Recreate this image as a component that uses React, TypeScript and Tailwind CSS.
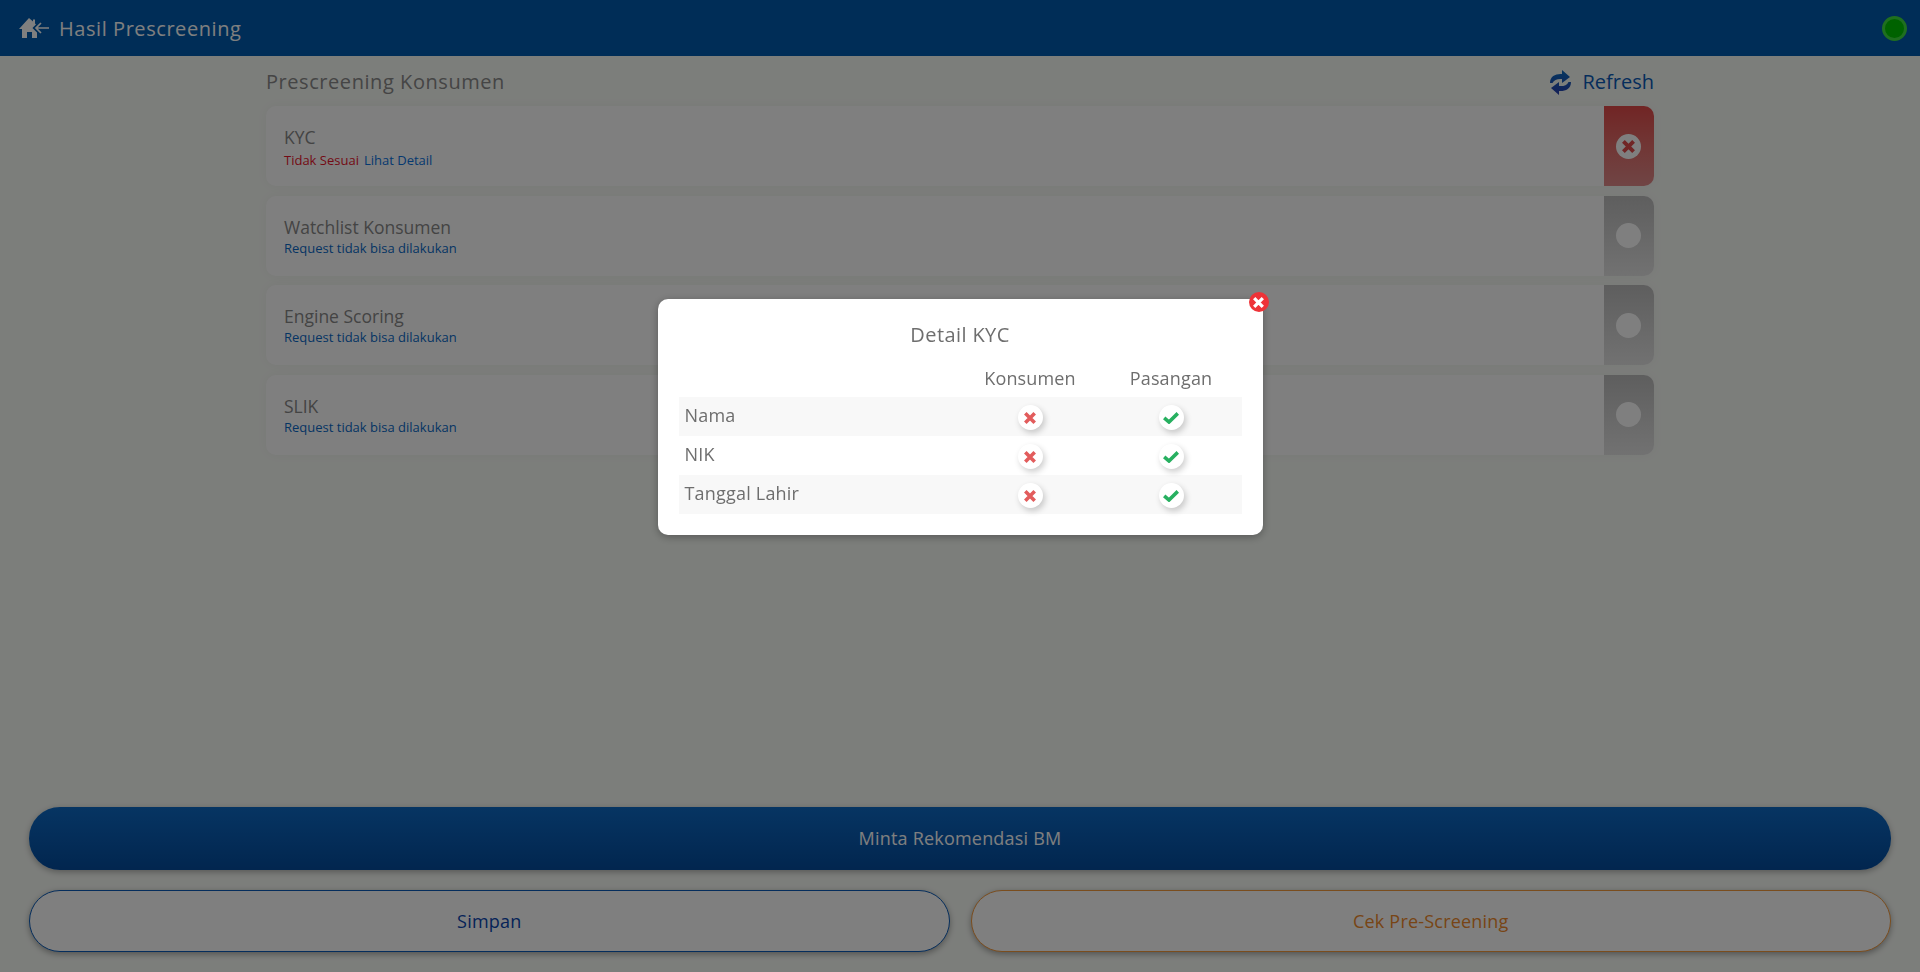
type Row = { title: string; failed?: boolean };

const rows: Row[] = [
  { title: "KYC", failed: true },
  { title: "Watchlist Konsumen" },
  { title: "Engine Scoring" },
  { title: "SLIK" },
];

const kycRows = ["Nama", "NIK", "Tanggal Lahir"];

function CrossIcon({ className }: { className: string }) {
  return (
    <svg viewBox="0 0 12 12" className={className} fill="none" stroke="currentColor" strokeWidth="3.6">
      <path d="M1.3 1.3 L10.7 10.7 M10.7 1.3 L1.3 10.7" />
    </svg>
  );
}

function CheckIcon({ className }: { className: string }) {
  return (
    <svg viewBox="0 0 16 12" className={className} fill="none" stroke="currentColor" strokeWidth="3.6">
      <path d="M1.2 5.8 L6 10 L14.8 1.4" />
    </svg>
  );
}

function HomeBackIcon() {
  return (
    <svg width="31" height="20" viewBox="0 0 31 20" className="text-white">
      <path
        fill="currentColor"
        d="M10 0 L14 3.5 L14 1.5 L16 1.5 L16 5.5 L20 9.5 L18 11 L18 20 L13 20 L13 14 L8 14 L8 20 L3 20 L3 11 L0 11 Z"
      />
      <path d="M22 5 L17 10 L22 15" fill="none" stroke="#005aae" strokeWidth="5" />
      <path d="M22 5 L17 10 L22 15 M17 10 L30 10" fill="none" stroke="currentColor" strokeWidth="1.7" />
    </svg>
  );
}

function RefreshIcon() {
  return (
    <svg width="21" height="25" viewBox="0 0 21 25">
      <defs>
        <linearGradient id="refresh-fill" x1="0" y1="0" x2="0" y2="1">
          <stop offset="0" stopColor="#0a6cc0" />
          <stop offset="1" stopColor="#2a3fb0" />
        </linearGradient>
      </defs>
      <path
        fill="url(#refresh-fill)"
        d="M0 13 C0 6 6 3.5 12 4 L12 0 L20 7 L12 13 L12 9 C8 8.5 4 9.5 2.5 13 Z M21 12 C21 19 15 21.5 9 21 L9 25 L1 18 L9 12 L9 16 C13 16.5 17 15.5 18.5 12 Z"
      />
    </svg>
  );
}

function PrescreeningCard({ title, failed }: Row) {
  return (
    <div className="flex h-[80px] overflow-hidden rounded-[10px] bg-white shadow-[0_0_12px_rgba(0,0,0,0.04)]">
      <div className="flex-1 pl-[18px] pt-[19px]">
        <div className="text-[17.5px] leading-[24px] text-[#888888]">{title}</div>
        {failed ? (
          <div className="mt-[3px] flex gap-[5px] text-[13px] font-medium leading-[16px]">
            <span className="text-[#e8142c]">Tidak Sesuai</span>
            <span className="text-[#0a72e0]">Lihat Detail</span>
          </div>
        ) : (
          <div className="mt-[1px] text-[13px] font-medium leading-[16px] text-[#0a6ac8]">
            Request tidak bisa dilakukan
          </div>
        )}
      </div>
      <div
        className={`flex w-[50px] items-center justify-center bg-gradient-to-b pr-[2px] ${
          failed ? "from-[#e24a4a] to-[#e08a8a]" : "from-[#bdbdbd] to-[#e4e4e4]"
        }`}
      >
        <div className="flex h-[25px] w-[25px] items-center justify-center rounded-full bg-white">
          {failed && <CrossIcon className="h-[13px] w-[13px] text-[#e24a4a]" />}
        </div>
      </div>
    </div>
  );
}

function StatusDot({ ok }: { ok: boolean }) {
  return (
    <div className="mx-auto mt-[2px] flex h-[25px] w-[25px] items-center justify-center rounded-full bg-white shadow-[2px_3px_6px_rgba(0,0,0,0.2)]">
      {ok ? (
        <CheckIcon className="h-[12px] w-[16px] text-[#27b060]" />
      ) : (
        <CrossIcon className="h-[12px] w-[12px] text-[#e25c5c]" />
      )}
    </div>
  );
}

export default function App() {
  return (
    <div className="flex h-screen flex-col overflow-hidden bg-[#f9fcf7] font-['Open_Sans','Noto_Sans',sans-serif]">
      {/* Top bar */}
      <header className="flex h-14 flex-none items-center justify-between bg-[#005aae] pl-[19px] pr-[13px]">
        <div className="flex items-center gap-[9px] text-white">
          <HomeBackIcon />
          <span className="pt-[1px] text-[20px] tracking-[0.56px]">Hasil Prescreening</span>
        </div>
        <div className="h-[25px] w-[25px] rounded-full border-[3px] border-[#3ede3e] bg-[#00c400]" />
      </header>

      <main className="flex-1">
        <div className="mx-auto w-[1388px]">
          <div className="flex h-[50px] items-center justify-between pt-[2px]">
            <h1 className="text-[20px] tracking-[0.56px] text-[#8a8a8a]">Prescreening Konsumen</h1>
            <div className="flex items-center gap-[11px] text-[#0a5bb8]">
              <RefreshIcon />
              <span className="text-[20px]">Refresh</span>
            </div>
          </div>
          <div className="flex flex-col gap-[9.5px]">
            {rows.map((row) => (
              <PrescreeningCard key={row.title} {...row} />
            ))}
          </div>
        </div>
      </main>

      {/* Actions */}
      <footer className="flex flex-none flex-col gap-[20px] px-[29px] pb-5">
        <button className="h-[63px] rounded-[31px] bg-gradient-to-b from-[#0e6ac6] to-[#044c9e] text-[18px] font-medium tracking-[0.2px] text-white shadow-[0_2px_6px_rgba(0,0,0,0.3)]">
          Minta Rekomendasi BM
        </button>
        <div className="grid grid-cols-2 gap-[21px]">
          <button className="h-[62px] rounded-[31px] border border-[#0a5bb8] bg-white text-[18px] font-medium tracking-[0.2px] text-[#0a46b0] shadow-[0_2px_6px_rgba(0,0,0,0.35)]">
            Simpan
          </button>
          <button className="h-[62px] rounded-[31px] border border-[#f59a3c] bg-white text-[18px] font-medium tracking-[0.2px] text-[#f08a2c] shadow-[0_2px_6px_rgba(0,0,0,0.35)]">
            Cek Pre-Screening
          </button>
        </div>
      </footer>

      {/* Dim layer and KYC dialog */}
      <div className="fixed inset-0 flex justify-center bg-black/50 pt-[299px]">
        <div className="relative h-[236px] w-[605px] rounded-[10px] bg-white px-[21px] text-[#6e6e6e] shadow-[0_2px_8px_rgba(0,0,0,0.3)]">
          <div className="absolute -right-[6px] -top-[7px] flex h-[20px] w-[20px] items-center justify-center rounded-full bg-[#ee3338]">
            <CrossIcon className="h-[11px] w-[11px] text-white" />
          </div>
          <h2 className="h-[67px] pt-[22px] text-center text-[20px] leading-[28px] tracking-[0.4px]">Detail KYC</h2>
          <div className="grid h-[31px] grid-cols-[281px_141px_141px] text-center text-[18px] leading-[24px] tracking-[0.15px]">
            <span />
            <span>Konsumen</span>
            <span>Pasangan</span>
          </div>
          {kycRows.map((label, i) => (
            <div
              key={label}
              className={`grid h-[39px] grid-cols-[281px_141px_141px] items-center text-[18px] tracking-[0.2px] ${
                i % 2 === 0 ? "bg-[#f8f8f8]" : "bg-white"
              }`}
            >
              <span className="pb-[2px] pl-[6px]">{label}</span>
              <StatusDot ok={false} />
              <StatusDot ok />
            </div>
          ))}
        </div>
      </div>
    </div>
  );
}
